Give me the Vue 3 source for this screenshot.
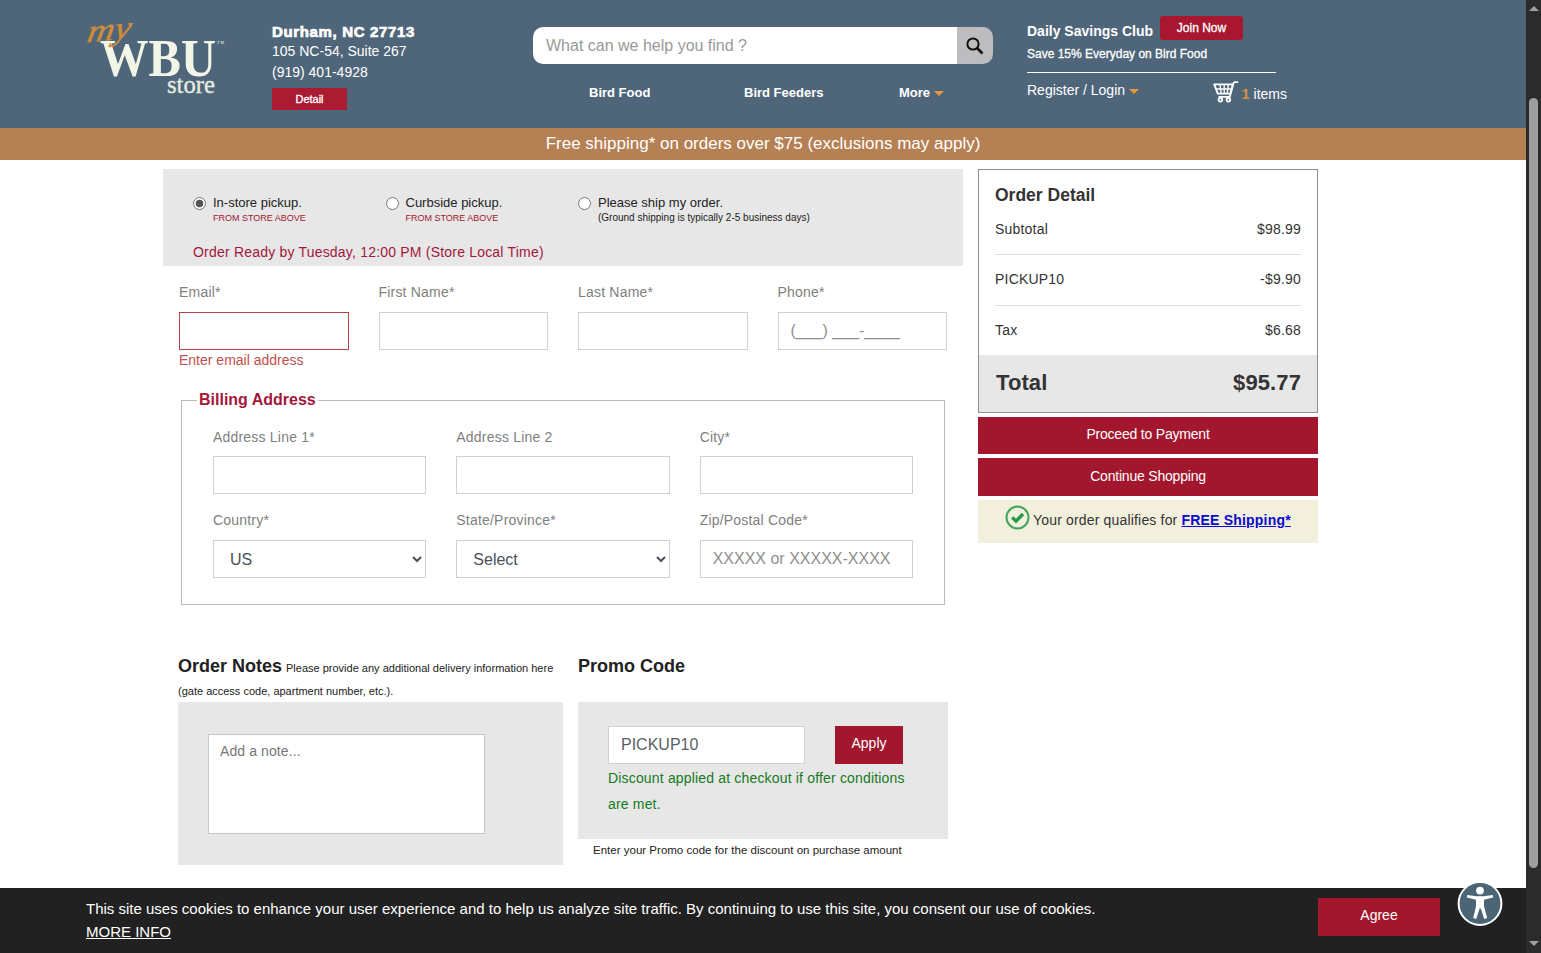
<template>
  <div class="page">
    <div class="content">
      <header class="header">
        <svg class="logo" width="142" height="80" viewBox="0 0 142 80" role="img" aria-label="my WBU store">
          <text class="logo__wbu" x="15" y="56" textLength="116" lengthAdjust="spacingAndGlyphs">WBU</text>
          <text class="logo__tm" x="132" y="24" textLength="7">TM</text>
          <text class="logo__store" x="82" y="73" textLength="48" lengthAdjust="spacingAndGlyphs">store</text>
          <text class="logo__my" x="2" y="21" textLength="44" lengthAdjust="spacingAndGlyphs" transform="translate(-5 2) rotate(-6 2 21) skewX(-16) translate(10 0)">my</text>
        </svg>

        <div class="store">
          <strong class="store__name">Durham, NC 27713</strong>
          <span>105 NC-54, Suite 267</span>
          <span>(919) 401-4928</span>
          <button type="button" class="store__detail">Detail</button>
        </div>

        <div class="middle">
          <div class="search">
            <input class="search__input" type="text" placeholder="What can we help you find ?" />
            <button type="button" class="search__button" aria-label="Search">
              <svg width="18" height="18" viewBox="0 0 18 18" fill="none" stroke="#111">
                <circle cx="7" cy="7" r="5.6" stroke-width="2" />
                <path d="M11 11l5.5 5.5" stroke-width="2.6" />
              </svg>
            </button>
          </div>
          <nav class="nav">
            <a>Bird Food</a>
            <a>Bird Feeders</a>
            <a>More <i class="caret"></i></a>
          </nav>
        </div>

        <div class="account">
          <div class="club">
            <strong>Daily Savings Club</strong>
            <button type="button" class="club__join">Join Now</button>
          </div>
          <p class="club__note">Save 15% Everyday on Bird Food</p>
          <div class="account__links">
            <a class="login">Register / Login <i class="caret"></i></a>
            <a class="cart">
              <svg width="26" height="22" viewBox="0 0 26 22" fill="none" stroke="#fff" stroke-width="1.8" stroke-linecap="round" stroke-linejoin="round">
                <path d="M1.2 3.4h18.6l-2.4 9.2H4.8z" />
                <path d="M24.4 1.2h-2.6q-1 0-1.3 1l-3.7 13.6H6.2" />
                <path d="M2.8 8h15.6M7 3.8l1.2 8.6M11.2 3.8v8.6M15.4 3.8l-1.2 8.6" stroke-width="1.3" />
                <circle cx="7.4" cy="18.8" r="1.8" />
                <circle cx="15.4" cy="18.8" r="1.8" />
              </svg>
              <span><b>1</b> items</span>
            </a>
          </div>
        </div>
      </header>

      <div class="promo-bar">Free shipping* on orders over $75 (exclusions may apply)</div>

      <main class="main">
        <div class="form">
          <section class="delivery">
            <div class="delivery__options">
              <label v-for="option in deliveryOptions" :key="option.id" class="option">
                <input v-model="delivery" type="radio" name="delivery" :value="option.id" />
                <span class="option__text">
                  {{ option.label }}
                  <small :class="{ 'option__note--red': option.store }">{{ option.note }}</small>
                </span>
              </label>
            </div>
            <p class="delivery__ready">Order Ready by Tuesday, 12:00 PM (Store Local Time)</p>
          </section>

          <section class="contact">
            <label v-for="field in contactFields" :key="field.label" class="field">
              <span class="field__label">{{ field.label }}</span>
              <input class="control" :class="{ 'control--error': field.error }" type="text" :placeholder="field.placeholder" />
              <span v-if="field.error" class="field__error">{{ field.error }}</span>
            </label>
          </section>

          <fieldset class="billing">
            <legend>Billing Address</legend>
            <div class="billing__grid">
              <label v-for="field in billingFields" :key="field.label" class="field">
                <span class="field__label">{{ field.label }}</span>
                <select v-if="field.options" class="control control--select">
                  <option v-for="item in field.options" :key="item">{{ item }}</option>
                </select>
                <input v-else class="control" type="text" :placeholder="field.placeholder" />
              </label>
            </div>
          </fieldset>

          <div class="extras">
            <section class="notes">
              <h2>
                Order Notes
                <small>Please provide any additional delivery information here (gate access code, apartment number, etc.).</small>
              </h2>
              <div class="notes__box">
                <textarea placeholder="Add a note..."></textarea>
              </div>
            </section>
            <section class="promo">
              <h2>Promo Code</h2>
              <div class="promo__box">
                <div class="promo__row">
                  <input v-model="promoCode" class="control" type="text" />
                  <button type="button" class="button">Apply</button>
                </div>
                <p class="promo__status">Discount applied at checkout if offer conditions are met.</p>
              </div>
              <p class="promo__hint">Enter your Promo code for the discount on purchase amount</p>
            </section>
          </div>
        </div>

        <aside class="summary">
          <div class="order">
            <h2>Order Detail</h2>
            <dl>
              <div v-for="line in orderLines" :key="line.label" class="order__line">
                <dt>{{ line.label }}</dt>
                <dd>{{ line.amount }}</dd>
              </div>
            </dl>
            <div class="order__total">
              <span>Total</span>
              <span>$95.77</span>
            </div>
          </div>
          <button type="button" class="button button--first">Proceed to Payment</button>
          <button type="button" class="button button--second">Continue Shopping</button>
          <div class="qualify">
            <svg width="25" height="25" viewBox="0 0 25 25" fill="none">
              <circle cx="12.5" cy="12.5" r="11" stroke="#42a55c" stroke-width="2" />
              <path d="M7.2 12.4l3.8 3.8 7-7.2" stroke="#249a48" stroke-width="3.4" />
            </svg>
            <span>Your order qualifies for <a>FREE Shipping*</a></span>
          </div>
        </aside>
      </main>

      <footer class="cookies">
        <p>
          This site uses cookies to enhance your user experience and to help us analyze site traffic. By continuing to use this site, you consent our use of cookies.
          <br />
          <a>MORE INFO</a>
        </p>
        <button type="button" class="button cookies__agree">Agree</button>
        <svg class="accessibility" width="46" height="46" viewBox="0 0 46 46">
          <circle cx="23" cy="22.5" r="21.4" fill="#4b6575" stroke="#fff" stroke-width="2" />
          <circle cx="23" cy="9.6" r="3.9" fill="#fff" />
          <path
            d="M10.2 14l9.4 1.3h6.8l9.4-1.3.4 2.6-9.2 2.2v6.4l3.2 11.8-3 .9-3.4-10.5h-1.2l-3.4 10.5-3-.9L19 25.2v-6.4l-9.2-2.2z"
            fill="#fff"
          />
        </svg>
      </footer>
    </div>

    <div class="scrollbar">
      <i class="scrollbar__arrow scrollbar__arrow--up"></i>
      <i class="scrollbar__thumb"></i>
      <i class="scrollbar__arrow scrollbar__arrow--down"></i>
    </div>
  </div>
</template>

<script setup>
import { ref } from 'vue'

const delivery = ref('store')
const promoCode = ref('PICKUP10')

const deliveryOptions = [
  { id: 'store', label: 'In-store pickup.', note: 'FROM STORE ABOVE', store: true },
  { id: 'curbside', label: 'Curbside pickup.', note: 'FROM STORE ABOVE', store: true },
  { id: 'ship', label: 'Please ship my order.', note: '(Ground shipping is typically 2-5 business days)' }
]

const contactFields = [
  { label: 'Email*', error: 'Enter email address' },
  { label: 'First Name*' },
  { label: 'Last Name*' },
  { label: 'Phone*', placeholder: '(___) ___-____' }
]

const billingFields = [
  { label: 'Address Line 1*' },
  { label: 'Address Line 2' },
  { label: 'City*' },
  { label: 'Country*', options: ['US'] },
  { label: 'State/Province*', options: ['Select'] },
  { label: 'Zip/Postal Code*', placeholder: 'XXXXX or XXXXX-XXXX' }
]

const orderLines = [
  { label: 'Subtotal', amount: '$98.99' },
  { label: 'PICKUP10', amount: '-$9.90' },
  { label: 'Tax', amount: '$6.68' }
]
</script>

<style>
body {
  margin: 0;
  overflow: hidden;
}
</style>

<style scoped>
* {
  box-sizing: border-box;
}

p,
h2,
dl,
dd {
  margin: 0;
}

button,
input,
select,
textarea {
  margin: 0;
  font-family: inherit;
}

.page {
  display: flex;
  width: 1541px;
  height: 953px;
  background: #fff;
  color: #333;
  font-family: 'Liberation Sans', Arial, sans-serif;
  font-size: 14px;
}

.content {
  display: flex;
  flex-direction: column;
  width: 1526px;
}

.button {
  height: 38px;
  padding: 0 0 3px;
  border: 0;
  background: #a3172e;
  color: #fff;
  font-size: 14px;
}

.caret {
  display: inline-block;
  border: 5px solid transparent;
  border-top-color: #e39a3c;
  border-bottom: 0;
  vertical-align: 1px;
}

/* header */
.header {
  display: flex;
  height: 128px;
  padding-left: 85px;
  background: #4f667a;
  color: #fff;
}

.logo {
  flex: none;
  margin-top: 20px;
  overflow: visible;
  font-family: 'Liberation Serif', serif;
}

.logo__wbu {
  fill: #f1f6e6;
  font-size: 53px;
  font-weight: bold;
}

.logo__tm {
  fill: #f1f6e6;
  font-size: 4px;
}

.logo__store {
  fill: #e6eee2;
  font-size: 25px;
  stroke: #e6eee2;
  stroke-width: 0.3px;
}

.logo__my {
  fill: #cf8d3a;
  font-size: 32px;
  font-style: italic;
  stroke: #cf8d3a;
  stroke-width: 0.4px;
}

.store {
  display: flex;
  flex: none;
  flex-direction: column;
  align-items: flex-start;
  width: 216px;
  margin-right: 45px;
  padding: 22px 0 0 45px;
  line-height: 21px;
}

.store__name {
  height: 19px;
  font-size: 15px;
  line-height: 20px;
  letter-spacing: 0.65px;
  -webkit-text-stroke: 0.7px #fff;
}

.store__detail {
  width: 75px;
  height: 22px;
  margin-top: 5px;
  padding: 0;
  border: 0;
  background: #ab1b32;
  color: #fff;
  font-size: 11px;
  -webkit-text-stroke: 0.3px #fff;
}

.middle {
  width: 460px;
  margin-left: 45px;
  padding-top: 27px;
}

.search {
  display: flex;
  height: 37px;
  overflow: hidden;
  border-radius: 10px;
}

.search__input {
  flex: 1;
  padding: 0 13px;
  border: 0;
  background: #fff;
  font-size: 16px;
}

.search__input::placeholder {
  color: #999;
}

.search__button {
  display: flex;
  align-items: center;
  justify-content: center;
  width: 36px;
  padding: 0;
  border: 0;
  background: #bdbdbf;
}

.nav {
  display: grid;
  grid-template-columns: 155px 155px auto;
  padding: 19px 0 0 56px;
  font-size: 13px;
  font-weight: bold;
  line-height: 20px;
}

.account {
  width: 260px;
  margin-left: 34px;
  padding-top: 16px;
}

.club {
  display: flex;
  height: 28px;
}

.club strong {
  width: 133px;
  padding-top: 5px;
  line-height: 20px;
  white-space: nowrap;
}

.club__join {
  width: 83px;
  height: 24px;
  padding: 0;
  border: 0;
  border-radius: 3px;
  background: #a8172f;
  color: #fff;
  font-size: 12px;
  -webkit-text-stroke: 0.3px #fff;
}

.club__note {
  width: 249px;
  height: 29px;
  border-bottom: 1px solid #fff;
  font-size: 12px;
  line-height: 20px;
  -webkit-text-stroke: 0.3px #fff;
}

.account__links {
  display: flex;
  justify-content: space-between;
}

.login {
  padding-top: 7px;
  line-height: 20px;
}

.cart {
  display: flex;
  gap: 3px;
  padding-top: 8px;
  white-space: nowrap;
}

.cart span {
  padding-top: 3px;
  line-height: 20px;
}

.cart b {
  color: #d9923f;
}

.promo-bar {
  height: 32px;
  background: #b58054;
  color: #fff;
  font-size: 17px;
  line-height: 31px;
  text-align: center;
}

/* checkout form */
.main {
  display: flex;
  gap: 15px;
  height: 728px;
  padding: 9px 0 0 163px;
}

.form {
  width: 800px;
  letter-spacing: 0.15px;
}

.delivery {
  height: 97px;
  padding: 26px 30px 0;
  background: #e7e7e7;
}

.delivery__options {
  display: grid;
  grid-template-columns: 192.5px 192.5px auto;
  height: 47px;
}

.option {
  display: flex;
  gap: 7px;
  color: #222;
  font-size: 13px;
  letter-spacing: 0;
}

.option input {
  width: 13px;
  height: 13px;
  margin-top: 2px;
  appearance: none;
  border: 1px solid #767676;
  border-radius: 50%;
  background: #fff;
}

.option input:checked {
  background: radial-gradient(#555 0 3.5px, #fff 4.2px);
}

.option__text {
  line-height: 15px;
}

.option__text small {
  display: block;
  font-size: 10px;
}

.option__text small.option__note--red {
  color: #a3172e;
  font-size: 9px;
  line-height: 16px;
}

.delivery__ready {
  color: #a3173a;
  line-height: 21px;
  letter-spacing: 0.2px;
}

.contact {
  display: grid;
  grid-template-columns: repeat(4, 1fr);
  gap: 30px;
  height: 123px;
  padding: 16px 16px 0;
}

.field {
  display: flex;
  flex-direction: column;
}

.field__label {
  height: 30px;
  color: #808080;
  line-height: 21px;
  letter-spacing: 0.2px;
}

.field__error {
  color: #c0504d;
  line-height: 21px;
  letter-spacing: 0;
}

.control {
  width: 100%;
  height: 38px;
  padding: 0 12px;
  border: 1px solid #ced0d2;
  border-radius: 0;
  background: #fff;
  color: #5a5f64;
  font-size: 16px;
}

.control::placeholder {
  color: #8f8f8f;
}

.control--error {
  border-color: #b5444a;
}

.control--select {
  color: #495057;
}

.billing {
  height: 216px;
  margin: 0 18px;
  padding: 0 31px;
  border: 1px solid #b9b9b9;
}

.billing legend {
  margin-left: -16px;
  padding: 0 2px;
  color: #a3173a;
  font-size: 16px;
  font-weight: bold;
  line-height: 22px;
  letter-spacing: 0;
}

.billing__grid {
  display: grid;
  grid-template-columns: repeat(3, 1fr);
  gap: 15px 30px;
  padding-top: 15px;
}

.billing .field__label {
  line-height: 22px;
}

.billing .field:nth-child(n + 4) .field__label {
  height: 31px;
}

.extras {
  display: flex;
  gap: 15px;
  padding: 49px 15px 0;
}

.extras h2 {
  height: 48px;
  padding-top: 1px;
  color: #222;
  font-size: 18px;
  line-height: 23px;
  letter-spacing: 0;
}

.extras h2 small {
  margin-left: -1px;
  font-size: 11px;
  font-weight: normal;
  line-height: 1;
}

.notes {
  width: 385px;
}

.notes__box {
  height: 163px;
  padding: 32px 30px;
  background: #e7e7e7;
}

.notes textarea {
  display: block;
  width: 277px;
  height: 100px;
  padding: 8px 11px;
  border: 1px solid #c6c6c6;
  resize: none;
  font-size: 14px;
  letter-spacing: 0.1px;
}

.notes textarea::placeholder {
  color: #777;
}

.promo {
  width: 370px;
}

.promo__box {
  height: 137px;
  padding: 24px 30px 0;
  background: #e7e7e7;
}

.promo__row {
  display: flex;
  gap: 30px;
}

.promo__row .control {
  width: 197px;
}

.promo__row .button {
  width: 68px;
  padding-bottom: 4px;
}

.promo__status {
  margin-top: 1px;
  color: #157a1c;
  line-height: 26px;
  letter-spacing: 0.17px;
}

.promo__hint {
  padding-left: 15px;
  color: #222;
  font-size: 11.5px;
  line-height: 22px;
  letter-spacing: 0.01px;
}

/* order summary */
.summary {
  display: flex;
  flex-direction: column;
  width: 340px;
  letter-spacing: 0.2px;
}

.order {
  height: 244px;
  border: 1px solid #909090;
}

.order h2 {
  padding: 13px 16px 0;
  font-size: 17.5px;
  line-height: 24px;
  letter-spacing: 0;
}

.order dl {
  height: 148px;
  padding: 0 16px;
}

.order__line {
  display: flex;
  justify-content: space-between;
  height: 51px;
  padding-top: 14px;
  line-height: 20px;
}

.order__line:first-child {
  height: 48px;
  padding-top: 12px;
}

.order__line:not(:last-child) {
  border-bottom: 1px solid #dedede;
}

.order__total {
  display: flex;
  justify-content: space-between;
  height: 57px;
  padding: 0 16px 0 17px;
  background: #e7e7e7;
  font-size: 22px;
  font-weight: bold;
  line-height: 55px;
  letter-spacing: 0.1px;
}

.summary .button {
  flex: none;
  margin-top: 4px;
  letter-spacing: -0.2px;
}

.summary .button--first {
  height: 37px;
}

.qualify {
  display: flex;
  gap: 3px;
  height: 43px;
  margin-top: 4px;
  padding: 5px 0 0 27px;
  background: #f2efdc;
  line-height: 30px;
  letter-spacing: 0.17px;
  white-space: nowrap;
}

.qualify a {
  color: #0a0ad0;
  font-weight: bold;
  letter-spacing: 0.2px;
  text-decoration: underline;
}

/* cookie banner */
.cookies {
  position: relative;
  display: flex;
  height: 65px;
  padding: 10px 86px 0;
  background: #212121;
  color: #fff;
  font-size: 15px;
  line-height: 22.5px;
}

.cookies p {
  flex: 1;
}

.cookies a {
  text-decoration: underline;
}

.cookies__agree {
  width: 122px;
  padding-bottom: 4px;
}

.accessibility {
  position: absolute;
  top: -7px;
  right: 23px;
}

/* window scrollbar */
.scrollbar {
  display: flex;
  flex-direction: column;
  align-items: center;
  width: 15px;
  background: #2b2b2b;
}

.scrollbar__arrow {
  border: 5px solid transparent;
}

.scrollbar__arrow--up {
  margin-top: 6px;
  border-top: 0;
  border-bottom-color: #a0a0a0;
}

.scrollbar__thumb {
  width: 9px;
  height: 770px;
  margin: 87px 0 73px;
  border-radius: 5px;
  background: #9e9e9e;
}

.scrollbar__arrow--down {
  border-top-color: #a0a0a0;
  border-bottom: 0;
}
</style>
